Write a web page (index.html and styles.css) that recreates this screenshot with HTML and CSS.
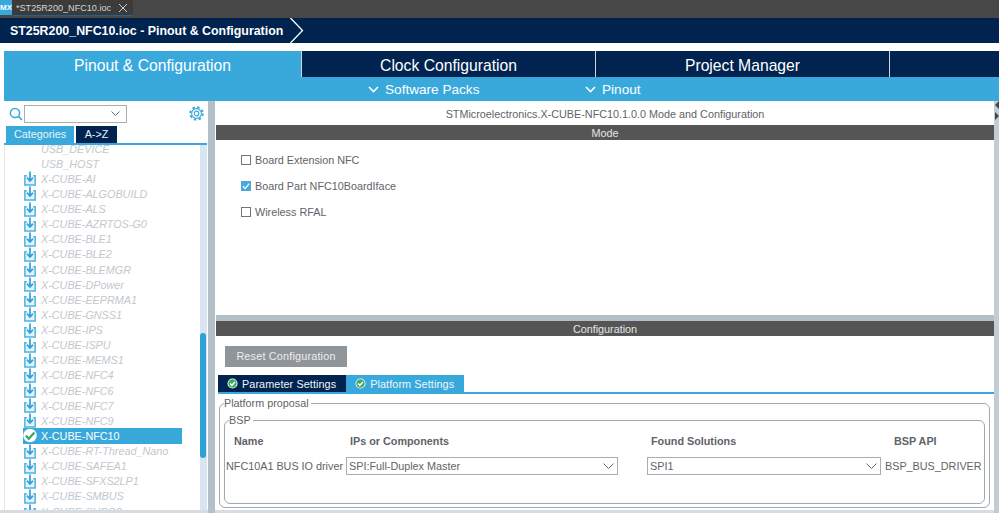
FILE: index.html
```html
<!DOCTYPE html>
<html lang="en">

<head>
    <meta charset="UTF-8">
    <title>ST25R200_NFC10.ioc - Pinout &amp; Configuration</title>
    <link rel="stylesheet" href="styles.css">
</head>

<body>
    <svg width="0" height="0" class="defs">
        <symbol id="dl" viewBox="0 0 14 16">
            <path d="M3.5 5H1.5V15H12.5V5H10.5" fill="#e4f2fa" stroke="#4db3e3" stroke-width="1.6"/>
            <path d="M7 0.5V10M3.8 7.2L7 10.6L10.2 7.2" fill="none" stroke="#2f9fd8" stroke-width="1.8"/>
        </symbol>
        <symbol id="ok" viewBox="0 0 12 12">
            <circle cx="6" cy="6" r="5.5" fill="#fff"/>
            <circle cx="6" cy="6" r="4.6" fill="#3cab6a"/>
            <path d="M3.4 6.1L5.3 8L8.7 4.3" fill="none" stroke="#fff" stroke-width="1.6"/>
        </symbol>
        <symbol id="okbig" viewBox="0 0 14 14">
            <circle cx="7" cy="7" r="6.8" fill="#fff"/>
            <path d="M2.8 7.2L5.8 10.2L11.4 4" fill="none" stroke="#3cab6a" stroke-width="2.4"/>
        </symbol>
    </svg>

    <div class="file-bar">
        <div class="mx-icon">MX</div>
        <div class="file-tab">
            <span>*ST25R200_NFC10.ioc</span>
            <svg class="close-x" width="10" height="10" viewBox="0 0 10 10">
                <path d="M1 1L9 9M9 1L1 9" stroke="#d0d0d0" stroke-width="1"/>
            </svg>
        </div>
    </div>

    <div class="crumb">
        <span>ST25R200_NFC10.ioc - Pinout &amp; Configuration</span>
        <svg class="crumb-arrow" width="14" height="25" viewBox="0 0 14 25">
            <path d="M0.5 0L12.5 12.5L0.5 25" fill="none" stroke="#fff" stroke-width="1.3"/>
        </svg>
    </div>

    <div class="nav">
        <div class="nav-tab active">Pinout &amp; Configuration</div>
        <div class="nav-tab">Clock Configuration</div>
        <div class="nav-tab">Project Manager</div>
        <div class="nav-tab last"></div>
    </div>

    <div class="subnav">
        <div class="subnav-item packs">
            <svg width="11" height="7" viewBox="0 0 11 7"><path d="M1 1L5.5 5.5L10 1" fill="none" stroke="#fff" stroke-width="1.6"/></svg>
            <span>Software Packs</span>
        </div>
        <div class="subnav-item">
            <svg width="11" height="7" viewBox="0 0 11 7"><path d="M1 1L5.5 5.5L10 1" fill="none" stroke="#fff" stroke-width="1.6"/></svg>
            <span>Pinout</span>
        </div>
    </div>

    <div class="main">
        <!-- Left tree -->
        <div class="side">
            <div class="search-row">
                <svg class="search-icon" width="14" height="14" viewBox="0 0 14 14">
                    <circle cx="6" cy="6" r="4.6" fill="none" stroke="#39a9dc" stroke-width="1.5"/>
                    <path d="M9.4 9.4L13 13" stroke="#39a9dc" stroke-width="1.7"/>
                </svg>
                <div class="combo">
                    <svg width="9" height="5" viewBox="0 0 9 5"><path d="M0.5 0.5L4.5 4.5L8.5 0.5" fill="none" stroke="#666" stroke-width="1"/></svg>
                </div>
                <svg class="gear" width="15" height="15" viewBox="0 0 15 15">
                    <circle cx="7.5" cy="7.5" r="6.2" fill="none" stroke="#39a9dc" stroke-width="2" stroke-dasharray="2.43 2.44"/>
                    <circle cx="7.5" cy="7.5" r="4.9" fill="#fff" stroke="#39a9dc" stroke-width="1.1"/>
                    <circle cx="7.5" cy="7.5" r="2.3" fill="none" stroke="#39a9dc" stroke-width="1.2"/>
                </svg>
            </div>
            <div class="side-tabs">
                <div class="side-tab blue">Categories</div>
                <div class="side-tab navy">A-&gt;Z</div>
            </div>
            <div class="tree">
                <div class="tree-list">
                    <div class="row plain"><span>USB_DEVICE</span></div>
                    <div class="row plain"><span>USB_HOST</span></div>
                    <div class="row"><svg class="row-icon"><use href="#dl"/></svg><span>X-CUBE-AI</span></div>
                    <div class="row"><svg class="row-icon"><use href="#dl"/></svg><span>X-CUBE-ALGOBUILD</span></div>
                    <div class="row"><svg class="row-icon"><use href="#dl"/></svg><span>X-CUBE-ALS</span></div>
                    <div class="row"><svg class="row-icon"><use href="#dl"/></svg><span>X-CUBE-AZRTOS-G0</span></div>
                    <div class="row"><svg class="row-icon"><use href="#dl"/></svg><span>X-CUBE-BLE1</span></div>
                    <div class="row"><svg class="row-icon"><use href="#dl"/></svg><span>X-CUBE-BLE2</span></div>
                    <div class="row"><svg class="row-icon"><use href="#dl"/></svg><span>X-CUBE-BLEMGR</span></div>
                    <div class="row"><svg class="row-icon"><use href="#dl"/></svg><span>X-CUBE-DPower</span></div>
                    <div class="row"><svg class="row-icon"><use href="#dl"/></svg><span>X-CUBE-EEPRMA1</span></div>
                    <div class="row"><svg class="row-icon"><use href="#dl"/></svg><span>X-CUBE-GNSS1</span></div>
                    <div class="row"><svg class="row-icon"><use href="#dl"/></svg><span>X-CUBE-IPS</span></div>
                    <div class="row"><svg class="row-icon"><use href="#dl"/></svg><span>X-CUBE-ISPU</span></div>
                    <div class="row"><svg class="row-icon"><use href="#dl"/></svg><span>X-CUBE-MEMS1</span></div>
                    <div class="row"><svg class="row-icon"><use href="#dl"/></svg><span>X-CUBE-NFC4</span></div>
                    <div class="row"><svg class="row-icon"><use href="#dl"/></svg><span>X-CUBE-NFC6</span></div>
                    <div class="row"><svg class="row-icon"><use href="#dl"/></svg><span>X-CUBE-NFC7</span></div>
                    <div class="row"><svg class="row-icon"><use href="#dl"/></svg><span>X-CUBE-NFC9</span></div>
                    <div class="row selected"><svg class="row-icon"><use href="#okbig"/></svg><span>X-CUBE-NFC10</span></div>
                    <div class="row"><svg class="row-icon"><use href="#dl"/></svg><span>X-CUBE-RT-Thread_Nano</span></div>
                    <div class="row"><svg class="row-icon"><use href="#dl"/></svg><span>X-CUBE-SAFEA1</span></div>
                    <div class="row"><svg class="row-icon"><use href="#dl"/></svg><span>X-CUBE-SFXS2LP1</span></div>
                    <div class="row"><svg class="row-icon"><use href="#dl"/></svg><span>X-CUBE-SMBUS</span></div>
                    <div class="row"><svg class="row-icon"><use href="#dl"/></svg><span>X-CUBE-SUBG2</span></div>
                </div>
                <div class="scroll-track"><div class="scroll-thumb"></div></div>
            </div>
        </div>

        <div class="splitter"></div>

        <!-- Right side -->
        <div class="content">
            <div class="content-title">STMicroelectronics.X-CUBE-NFC10.1.0.0 Mode and Configuration</div>
            <div class="band">Mode</div>
            <div class="mode-pane">
                <label class="check"><span class="box"></span>Board Extension NFC</label>
                <label class="check"><span class="box checked">
                    <svg width="10" height="10" viewBox="0 0 10 10"><path d="M2 5.2L4.2 7.6L8.2 2.6" fill="none" stroke="#fff" stroke-width="1.3"/></svg>
                </span>Board Part NFC10BoardIface</label>
                <label class="check"><span class="box"></span>Wireless RFAL</label>
            </div>
            <div class="pane-gap"></div>
            <div class="band">Configuration</div>
            <div class="config-pane">
                <div class="reset-btn">Reset Configuration</div>
                <div class="conf-tabs">
                    <div class="conf-tab navy"><svg class="tab-ok"><use href="#ok"/></svg>Parameter Settings</div>
                    <div class="conf-tab blue"><svg class="tab-ok"><use href="#ok"/></svg>Platform Settings</div>
                </div>
                <fieldset class="outer">
                    <legend>Platform proposal</legend>
                    <fieldset class="inner">
                        <legend>BSP</legend>
                        <div class="bsp-grid">
                            <div class="head head-name">Name</div>
                            <div class="head">IPs or Components</div>
                            <div></div>
                            <div class="head">Found Solutions</div>
                            <div class="head head-api">BSP API</div>

                            <div class="driver">NFC10A1 BUS IO driver</div>
                            <div class="select">SPI:Full-Duplex Master
                                <svg width="11" height="6" viewBox="0 0 11 6"><path d="M0.5 0.5L5.5 5.5L10.5 0.5" fill="none" stroke="#666" stroke-width="1"/></svg>
                            </div>
                            <div></div>
                            <div class="select">SPI1
                                <svg width="11" height="6" viewBox="0 0 11 6"><path d="M0.5 0.5L5.5 5.5L10.5 0.5" fill="none" stroke="#666" stroke-width="1"/></svg>
                            </div>
                            <div class="api">BSP_BUS_DRIVER</div>
                        </div>
                    </fieldset>
                </fieldset>
            </div>
        </div>

        <div class="right-rail">
            <svg width="5" height="26" viewBox="0 0 5 26"><path d="M5 0L1 4L5 8ZM1 11L5 15L1 19Z" fill="#444"/></svg>
        </div>
    </div>
</body>

</html>
```

FILE: styles.css
```css
body {
    margin: 0;
    width: 999px;
    height: 513px;
    overflow: hidden;
    background-color: #fff;
    font-family: "Liberation Sans", Arial, sans-serif;
    font-size: 10.8px;
    color: #5f6368;
}

.defs {
    display: block;
    height: 0;
}

.file-bar {
    display: flex;
    height: 18px;
    background-color: #474747;
}

.mx-icon {
    width: 12px;
    height: 15px;
    background-color: #39a9dc;
    color: #fff;
    font-size: 8px;
    font-weight: bold;
    line-height: 15px;
    text-align: center;
}

.file-tab {
    display: flex;
    align-items: center;
    width: 121px;
    height: 16px;
    padding-left: 4px;
    box-sizing: border-box;
    background-color: #3b3b3b;
    border-bottom: 1px solid #2a5f88;
    color: #d6d6d6;
    font-size: 9.1px;
    white-space: nowrap;
}

.close-x {
    margin-left: 7px;
}

.crumb {
    display: flex;
    align-items: center;
    height: 25px;
    padding-left: 10px;
    background-color: #002350;
    color: #fff;
    font-size: 12.4px;
    font-weight: bold;
}

.crumb-arrow {
    margin-left: 7px;
}

.nav {
    display: flex;
    height: 26px;
    margin-top: 8px;
    margin-left: 4px;
}

.nav-tab {
    width: 294px;
    box-sizing: border-box;
    background-color: #002350;
    border-left: 1px solid #cfd8e0;
    color: #fff;
    font-size: 15.7px;
    line-height: 29px;
    text-align: center;
}

.nav-tab.active {
    width: 297px;
    border-left: none;
    background-color: #39a9dc;
}

.nav-tab.last {
    flex: 1;
}

.subnav {
    display: flex;
    height: 24px;
    margin-left: 4px;
    background-color: #39a9dc;
    color: #fff;
    font-size: 13.6px;
}

.subnav-item {
    display: flex;
    align-items: center;
    gap: 6px;
}

.subnav-item.packs {
    width: 217px;
    margin-left: 364px;
}

.main {
    display: flex;
    align-items: flex-start;
    height: 412px;
    padding-left: 4px;
    background: linear-gradient(#fff 409px, #d5dde3 409px);
}

/* Left tree */
.side {
    display: flex;
    flex-direction: column;
    width: 204px;
    height: 409px;
    background-color: #fff;
}

.search-row {
    display: flex;
    align-items: center;
    height: 25px;
    padding-left: 5px;
}

.combo {
    display: flex;
    align-items: center;
    justify-content: flex-end;
    width: 103px;
    height: 18px;
    margin-left: 1px;
    padding-right: 6px;
    box-sizing: border-box;
    background-color: #fff;
    border: 1px solid #a9adb0;
}

.gear {
    margin-left: 62px;
}

.side-tabs {
    display: flex;
    gap: 2px;
    height: 17px;
    padding-left: 2px;
    margin-right: 1px;
    border-bottom: 2px solid #39a9dc;
}

.side-tab {
    line-height: 17px;
    text-align: center;
    color: #e8f4fa;
}

.side-tab.blue {
    width: 68px;
    background-color: #39a9dc;
}

.side-tab.navy {
    width: 41px;
    background-color: #002350;
}

.tree {
    flex: 1;
    display: flex;
    min-height: 0;
    overflow: hidden;
    border-left: 1px solid #e0e6ea;
}

.tree-list {
    flex: 1;
    margin-top: -4px;
    padding-left: 18px;
}

.row {
    display: flex;
    align-items: center;
    width: 159px;
    height: 15.13px;
    color: #c2c8cd;
    font-style: italic;
    white-space: nowrap;
}

.row-icon {
    flex: none;
    width: 14px;
    height: 15px;
    margin-right: 4px;
}

.row.plain {
    padding-left: 18px;
    box-sizing: border-box;
}

.row.selected {
    background-color: #39a9dc;
    color: #fff;
    font-style: normal;
}

.scroll-track {
    width: 7px;
    margin-right: 1px;
    background-color: #d8e6f3;
}

.scroll-thumb {
    width: 6px;
    height: 125px;
    margin-top: 188px;
    background-color: #2f9fd8;
    border-radius: 3px;
}

.splitter {
    width: 7px;
    height: 412px;
    background-color: #b4c0c8;
}

/* Right side */
.content {
    display: flex;
    flex-direction: column;
    width: 778px;
    height: 409px;
    margin-left: 1px;
    background-color: #fff;
}

.content-title {
    height: 24px;
    line-height: 26px;
    text-align: center;
}

.band {
    height: 15px;
    background-color: #545554;
    color: #e6e6e6;
    font-size: 10.8px;
    line-height: 16px;
    text-align: center;
}

.mode-pane {
    display: flex;
    flex-direction: column;
    gap: 6px;
    height: 175px;
    padding: 10px 0 0 25px;
    box-sizing: border-box;
}

.check {
    display: flex;
    align-items: center;
    gap: 4px;
    height: 20px;
}

.box {
    display: flex;
    width: 10px;
    height: 10px;
    box-sizing: border-box;
    border: 1px solid #777;
}

.box.checked {
    background-color: #4aa8dc;
    border: none;
}

.pane-gap {
    height: 6px;
    background-color: #b4c0c8;
}

.config-pane {
    flex: 1;
    padding: 10px 0 0;
}

.reset-btn {
    width: 122px;
    height: 21px;
    margin-left: 9px;
    background-color: #8f9599;
    color: #eceeef;
    letter-spacing: 0.2px;
    line-height: 21px;
    text-align: center;
}

.conf-tabs {
    display: flex;
    margin-top: 8px;
    margin-left: 2px;
    border-bottom: 2px solid #39a9dc;
}

.conf-tab {
    display: flex;
    align-items: center;
    height: 17px;
    padding: 0 10px 0 9px;
    color: #eef6fa;
    letter-spacing: 0.1px;
}

.conf-tab.navy {
    background-color: #002350;
}

.conf-tab.blue {
    background-color: #39a9dc;
}

.tab-ok {
    flex: none;
    width: 11px;
    height: 11px;
    margin-right: 4px;
}

fieldset {
    min-width: 0;
    margin: 0;
    padding: 0;
    border: 1px solid #a3a8ac;
    border-radius: 6px;
}

legend {
    padding: 0 2px 0 0;
    line-height: 14px;
}

.outer {
    width: 771px;
    height: 112px;
    box-sizing: border-box;
    margin-top: 2px;
    margin-left: 3px;
    padding: 0 4px;
}

.inner {
    height: 91px;
    box-sizing: border-box;
    margin-top: 3px;
    padding: 4px 1px 0 1px;
}

.inner legend {
    margin-left: 3px;
}

.bsp-grid {
    display: grid;
    grid-template-columns: 120px 272px 29px 234px 1fr;
    grid-template-rows: 20px 20px;
    row-gap: 5px;
    align-items: center;
}

.head {
    padding-left: 4px;
    font-weight: bold;
}

.head-name {
    padding-left: 8px;
}

.head-api {
    padding-left: 13px;
}

.driver {
    white-space: nowrap;
}

.select {
    display: flex;
    align-items: center;
    justify-content: space-between;
    height: 18px;
    padding: 0 3px 0 2px;
    box-sizing: border-box;
    border: 1px solid #a9adb0;
}

.api {
    padding-left: 4px;
    white-space: nowrap;
}

.right-rail {
    flex: 1;
    align-self: stretch;
    background-color: #c3ccd2;
}
```
